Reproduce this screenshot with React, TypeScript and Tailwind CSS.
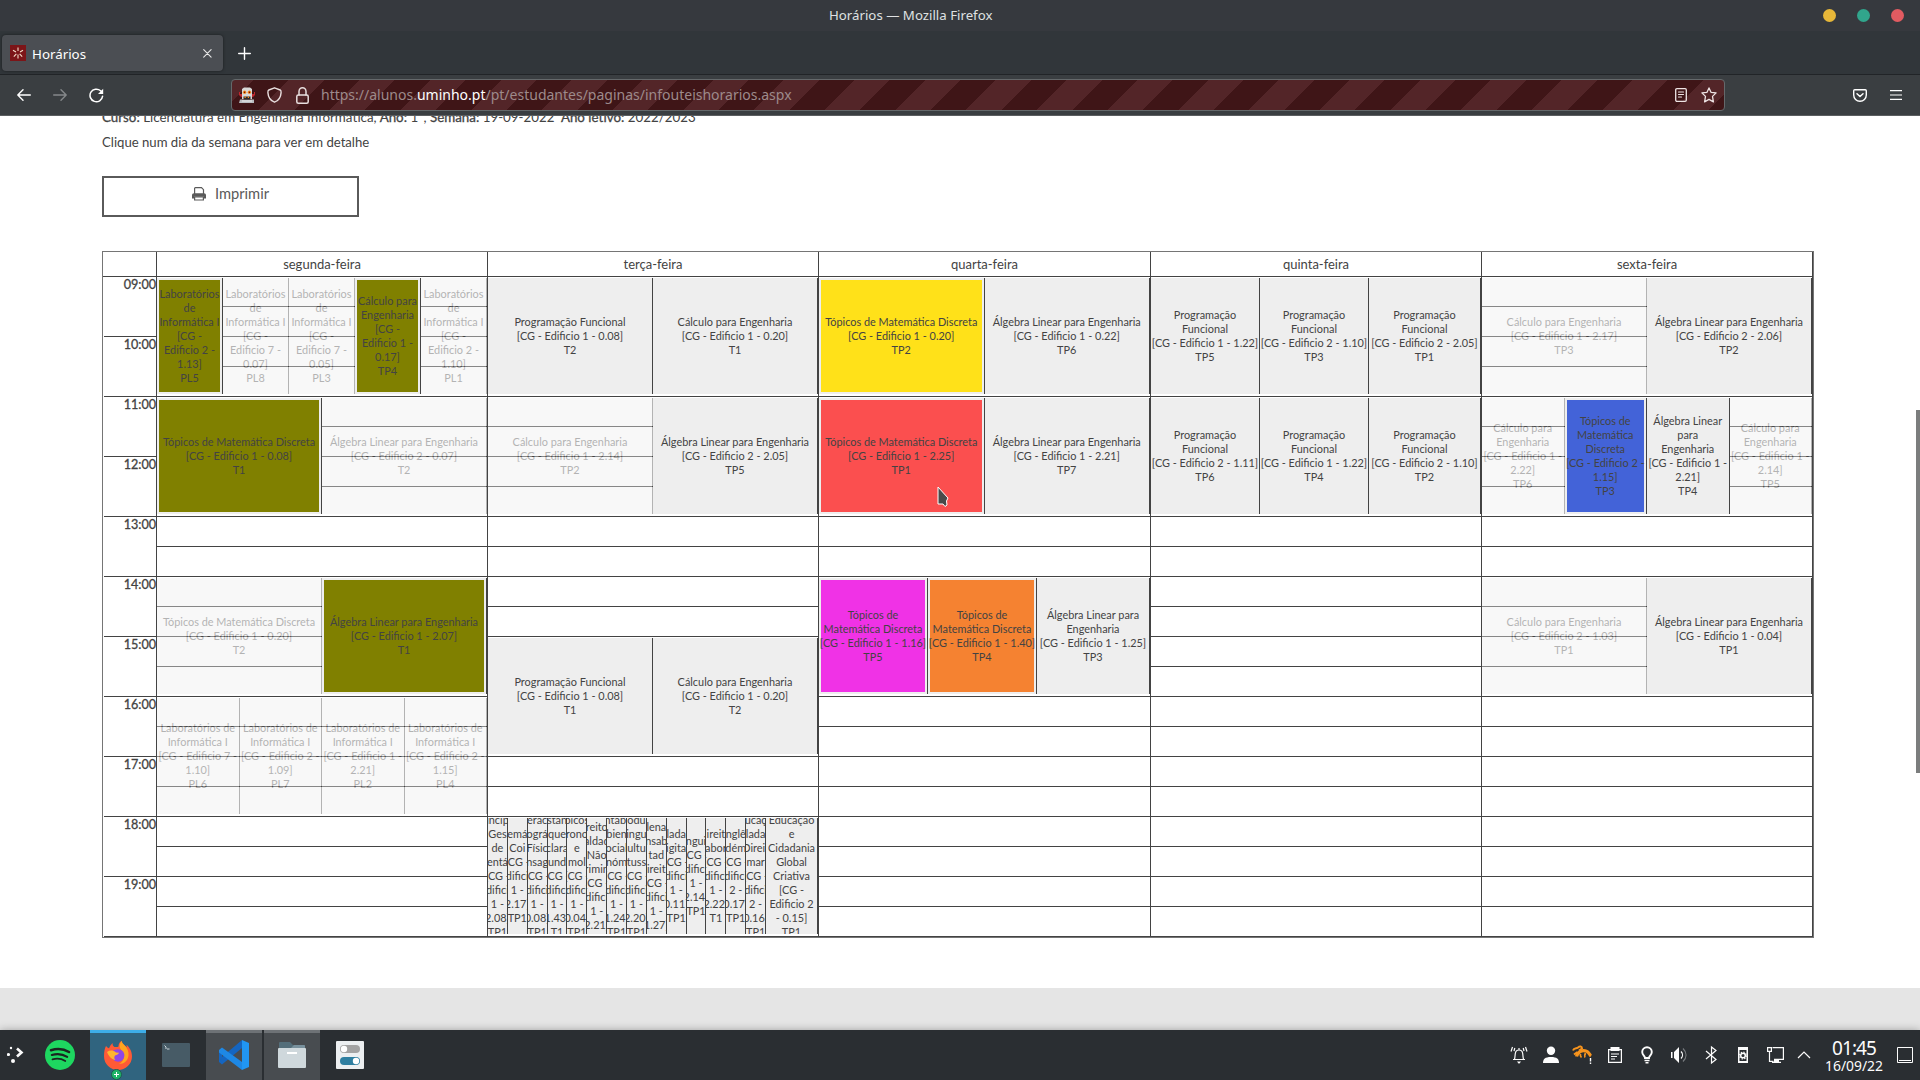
import React from "react";

type Ev = { lines: string[]; faded?: boolean; bg?: string; w?: string };
type Block = { start: number; events: Ev[] };

const OLIVE = "bg-[#808000]";

const TMD = "Tópicos de Matemática Discreta";
const ALE = "Álgebra Linear para Engenharia";
const CE = "Cálculo para Engenharia";
const PF = "Programação Funcional";

const room = (r: string) => `[CG - Edificio ${r}]`;
const lab = (a: string, b: string, c: string, faded = true, bg?: string): Ev => ({
  lines: ["Laboratórios", "de", "Informática I", "[CG -", `Edificio ${a} -`, `${b}]`, c],
  faded,
  bg,
});
const labWide = (a: string, b: string, c: string): Ev => ({
  lines: ["Laboratórios de", "Informática I", `[CG - Edificio ${a} -`, `${b}]`, c],
  faded: true,
});
const pf = (r: string, t: string, w: string): Ev => ({
  lines: ["Programação", "Funcional", room(r), t],
  w,
});
const W109 = "w-[109px] flex-none";
const FILL = "flex-1 min-w-0";

const days: { name: string; width: string; blocks: Block[] }[] = [
  {
    name: "segunda-feira",
    width: "w-[331px]",
    blocks: [
      {
        start: 0,
        events: [
          lab("2", "1.13", "PL5", false, OLIVE),
          lab("7", "0.07", "PL8"),
          lab("7", "0.05", "PL3"),
          { lines: ["Cálculo para", "Engenharia", "[CG -", "Edificio 1 -", "0.17]", "TP4"], bg: OLIVE },
          lab("2", "1.10", "PL1"),
        ],
      },
      {
        start: 4,
        events: [
          { lines: [TMD, room("1 - 0.08"), "T1"], bg: OLIVE },
          { lines: [ALE, room("2 - 0.07"), "T2"], faded: true },
        ],
      },
      {
        start: 10,
        events: [
          { lines: [TMD, room("1 - 0.20"), "T2"], faded: true },
          { lines: [ALE, room("1 - 2.07"), "T1"], bg: OLIVE },
        ],
      },
      {
        start: 14,
        events: [
          labWide("7", "1.10", "PL6"),
          labWide("2", "1.09", "PL7"),
          labWide("1", "2.21", "PL2"),
          labWide("2", "1.15", "PL4"),
        ],
      },
    ],
  },
  {
    name: "terça-feira",
    width: "w-[331px]",
    blocks: [
      {
        start: 0,
        events: [
          { lines: [PF, room("1 - 0.08"), "T2"] },
          { lines: [CE, room("1 - 0.20"), "T1"] },
        ],
      },
      {
        start: 4,
        events: [
          { lines: [CE, room("1 - 2.14"), "TP2"], faded: true },
          { lines: [ALE, room("2 - 2.05"), "TP5"] },
        ],
      },
      {
        start: 12,
        events: [
          { lines: [PF, room("1 - 0.08"), "T1"] },
          { lines: [CE, room("1 - 0.20"), "T2"] },
        ],
      },
      {
        start: 18,
        events: [
          ["incíp", "Ges", "de", "entá", "[CG -", "Edificio", "1 -", "2.08]", "TP1"],
          ["emá", "Coi", "[CG -", "Edificio", "1 -", "2.17]", "TP1"],
          ["erac", "ográ", "Físic", "nsag", "[CG -", "Edificio", "1 -", "0.08]", "TP1"],
          ["stân", "que", "clara", "und", "[CG -", "Edificio", "1 -", "1.43]", "T1"],
          ["picos", "rono", "e", "mol", "[CG -", "Edificio", "1 -", "0.04]", "TP1"],
          ["reito", "aldad", "Não", "rimin", "[CG -", "Edificio", "1 -", "2.21]"],
          ["ntabi", "bien", "ocial", "nóm", "[CG -", "Edificio", "1 -", "1.24]", "TP1"],
          ["odu", "ingu", "ultu", "tuss", "[CG -", "Edificio", "1 -", "2.20]", "TP1"],
          ["lena", "nsab", "tad", "ireit", "[CG -", "Edificio", "1 -", "1.27]"],
          ["lada", "igita", "[CG -", "Edificio", "1 -", "0.11]", "TP1"],
          ["ngui", "[CG -", "Edificio", "1 -", "2.14]", "TP1"],
          ["ireit", "abor", "[CG -", "Edificio", "1 -", "2.22]", "T1"],
          ["nglê", "dém", "[CG -", "Edificio", "2 -", "0.17]", "TP1"],
          ["ucaç", "lada", "Direit", "mar", "[CG -", "Edificio", "2 -", "0.16]", "TP1"],
          ["Educação", "e", "Cidadania", "Global", "Criativa", "[CG -", "Edificio 2", "- 0.15]", "TP1"],
        ].map((lines, i) => ({ lines, w: i < 14 ? "w-[19.87px] flex-none" : FILL })),
      },
    ],
  },
  {
    name: "quarta-feira",
    width: "w-[332px]",
    blocks: [
      {
        start: 0,
        events: [
          { lines: [TMD, room("1 - 0.20"), "TP2"], bg: "bg-[#ffe119]" },
          { lines: [ALE, room("1 - 0.22"), "TP6"] },
        ],
      },
      {
        start: 4,
        events: [
          { lines: [TMD, room("1 - 2.25"), "TP1"], bg: "bg-[#fb4f4f]" },
          { lines: [ALE, room("1 - 2.21"), "TP7"] },
        ],
      },
      {
        start: 10,
        events: [
          { lines: ["Tópicos de", "Matemática Discreta", room("1 - 1.16"), "TP5"], bg: "bg-[#f032e6]", w: W109 },
          { lines: ["Tópicos de", "Matemática Discreta", room("1 - 1.40"), "TP4"], bg: "bg-[#f58231]", w: W109 },
          { lines: ["Álgebra Linear para", "Engenharia", room("1 - 1.25"), "TP3"], w: FILL },
        ],
      },
    ],
  },
  {
    name: "quinta-feira",
    width: "w-[331px]",
    blocks: [
      { start: 0, events: [pf("1 - 1.22", "TP5", W109), pf("2 - 1.10", "TP3", W109), pf("2 - 2.05", "TP1", FILL)] },
      { start: 4, events: [pf("2 - 1.11", "TP6", W109), pf("1 - 1.22", "TP4", W109), pf("2 - 1.10", "TP2", FILL)] },
    ],
  },
  {
    name: "sexta-feira",
    width: "w-[331px]",
    blocks: [
      {
        start: 0,
        events: [
          { lines: [CE, room("1 - 2.17"), "TP3"], faded: true },
          { lines: [ALE, room("2 - 2.06"), "TP2"] },
        ],
      },
      {
        start: 4,
        events: [
          { lines: ["Cálculo para", "Engenharia", "[CG - Edificio 1 -", "2.22]", "TP6"], faded: true },
          {
            lines: ["Tópicos de", "Matemática", "Discreta", "[CG - Edificio 2 -", "1.15]", "TP3"],
            bg: "bg-[#4363d8]",
          },
          { lines: ["Álgebra Linear", "para", "Engenharia", "[CG - Edificio 1 -", "2.21]", "TP4"] },
          { lines: ["Cálculo para", "Engenharia", "[CG - Edificio 1 -", "2.14]", "TP5"], faded: true },
        ],
      },
      {
        start: 10,
        events: [
          { lines: [CE, room("2 - 1.03"), "TP1"], faded: true },
          { lines: [ALE, room("1 - 0.04"), "TP1"] },
        ],
      },
    ],
  },
];

const hours = ["09:00", "10:00", "11:00", "12:00", "13:00", "14:00", "15:00", "16:00", "17:00", "18:00", "19:00"];

function EventBox({ ev }: { ev: Ev }) {
  return (
    <div
      className={`h-[116px] overflow-hidden border-r border-[#434343] bg-[#eeeeee] ${ev.faded ? "opacity-40" : ""} ${
        ev.w ?? "flex-1 min-w-0"
      }`}
    >
      <div className={`h-full ${ev.bg ? "p-0.5" : ""}`}>
        <div
          className={`flex h-full flex-col items-center justify-center text-[10.9px] leading-[14px] whitespace-nowrap ${
            ev.bg ?? ""
          }`}
        >
          {ev.lines.map((l, i) => (
            <span key={i}>{l}</span>
          ))}
        </div>
      </div>
    </div>
  );
}

function Timetable() {
  return (
    <div className="mt-[34px] ml-[102px] flex w-[1712px] border border-[#757575] text-[#434343]">
      <div className="w-[54px] border-r border-[#434343]">
        <div className="h-[25px] border-b border-[#434343]" />
        {hours.map((h) => (
          <div
            key={h}
            className="ml-px flex h-[60px] justify-end border-b border-[#434343] pt-px text-[12.6px] leading-[14px] [-webkit-text-stroke:0.3px_#434343]"
          >
            {h}
          </div>
        ))}
      </div>
      {days.map((d) => (
        <div key={d.name} className={`${d.width} flex-none border-r border-[#434343]`}>
          <div className="flex h-[25px] items-center justify-center border-b border-[#434343] pt-px text-[13px]">
            {d.name}
          </div>
          <div className="grid">
            <div className="col-start-1 row-start-1">
              {Array.from({ length: 22 }, (_, i) => (
                <div key={i} className="h-[30px] border-b border-[#434343]" />
              ))}
            </div>
            <div className="col-start-1 row-start-1 grid min-w-0 grid-rows-[repeat(22,30px)]">
              {d.blocks.map((b) => (
                <div
                  key={b.start}
                  className="col-start-1 flex min-w-0 pt-px pb-[3px]"
                  style={{ gridRow: `${b.start + 1} / span 4` }}
                >
                  {b.events.map((e, i) => (
                    <EventBox key={i} ev={e} />
                  ))}
                </div>
              ))}
            </div>
          </div>
        </div>
      ))}
    </div>
  );
}

const stroke = { fill: "none", stroke: "currentColor", strokeLinecap: "round", strokeLinejoin: "round" } as const;

function Browser() {
  return (
    <header className="flex-none font-['Noto_Sans',sans-serif]">
      <div className="flex h-[31px] items-center bg-[#36393e] pr-4">
        <div className="flex-1 pl-[829px] text-[13.25px] text-[#dfe1e2]">Horários — Mozilla Firefox</div>
        <div className="flex gap-[21px]">
          <span className="size-[13px] rounded-full bg-[#e7b739]" />
          <span className="size-[13px] rounded-full bg-[#31a58c]" />
          <span className="size-[13px] rounded-full bg-[#e25b61]" />
        </div>
      </div>
      <div className="flex h-11 items-start border-b border-[#212427] bg-[#31363a] pt-1 pl-0.5">
        <div className="flex h-9 w-[221px] items-center rounded bg-[#4b4e53] pr-[11px] pl-2 shadow-[0_0_3px_rgba(0,0,0,0.5)]">
          <svg width="16" height="16" viewBox="0 0 16 16">
            <rect width="16" height="16" fill="#7c1518" />
            <path
              d="M8 2.5v3.6M8 9.6v3.9M3 5.2l3 1.7M13 5.2l-3 1.7M3.8 11.6l2.6-2.7M12.2 11.6 9.6 8.9"
              stroke="#f5dcc8"
              strokeWidth="1.1"
            />
          </svg>
          <span className="ml-1.5 flex-1 pt-[3px] text-[13.33px] text-white">Horários</span>
          <svg width="9" height="9" viewBox="0 0 9 9" className="text-[#e8e8e8]" {...stroke}>
            <path d="M.7.7l7.4 7.4M8.1.7.7 8.1" strokeWidth="1.1" />
          </svg>
        </div>
        <svg width="13" height="13" viewBox="0 0 13 13" className="mt-3 ml-[15px] text-white" {...stroke}>
          <path d="M6.5.7v11.6M.7 6.5h11.6" strokeWidth="1.4" />
        </svg>
      </div>
      <div className="flex h-[41px] items-start border-b border-[#5b5e60] bg-[#3a3e41]">
        <div className="flex h-10 w-[231px] items-center gap-[22px] pl-[17px]">
          <svg width="14" height="12" viewBox="0 0 14 12" className="text-white" {...stroke}>
            <path d="M13.3 6H.8M6 .8.8 6 6 11.2" strokeWidth="1.4" />
          </svg>
          <svg width="14" height="12" viewBox="0 0 14 12" className="text-[#85888a]" {...stroke}>
            <path d="M.7 6h12.5M8 .8 13.2 6 8 11.2" strokeWidth="1.4" />
          </svg>
          <svg width="15" height="15" viewBox="0 0 15 15" className="text-white" {...stroke}>
            <path d="M13.6 8.2A6.3 6.3 0 1 1 11.6 2.8l1 1" strokeWidth="1.5" />
            <path d="M14.2.8v5.2H9z" fill="currentColor" stroke="none" />
          </svg>
        </div>
        <div className="mt-1 flex h-8 w-[1494px] items-center rounded border border-[#64696b] bg-[repeating-linear-gradient(-45deg,#3f1517_0px,#3f1517_11px,#532528_11px,#532528_36px,#3f1517_36px,#3f1517_50px)] pr-[7px] pl-[7px]">
          <svg width="16" height="16" viewBox="0 0 16 16">
            <path d="M0 5h1v2h2v3H2L0 8zM16 5h-1v2h-2v3h1l2-2z" fill="#c1272d" />
            <path d="M3 2 5 .5h6L13 2v10H3z" fill="#d8d8d8" />
            <path d="M1 12.5h14V16H0z" fill="#b9bcc0" />
            <circle cx="5.6" cy="5.2" r="1.7" fill="#f58a1f" />
            <circle cx="10.4" cy="5.2" r="1.7" fill="#f58a1f" />
            <circle cx="5.6" cy="5.2" r=".7" fill="#600" />
            <circle cx="10.4" cy="5.2" r=".7" fill="#600" />
            <path d="M4.5 9.5h7v3h-7z" fill="#332b2b" />
            <path d="M5.5 9.5h1.3v1.4H5.5zM8.8 9.5H10v1.4H8.8z" fill="#f58a1f" />
            <path d="M3 14h10" stroke="#eee" />
          </svg>
          <svg width="15" height="16" viewBox="0 0 15 16" className="ml-3 text-[#e8dede]" {...stroke}>
            <path
              d="M7.5.8 13.2 3c1 .4 1 1.2.9 2.6-.3 4.6-2.9 8.2-6.6 9.6C3.8 13.8 1.2 10.2.9 5.6.8 4.2.8 3.4 1.8 3z"
              strokeWidth="1.4"
            />
          </svg>
          <svg width="13" height="17" viewBox="0 0 13 17" className="ml-[14px] text-[#e8dede]" {...stroke}>
            <rect x=".8" y="8" width="11.4" height="8.2" rx="1.5" strokeWidth="1.5" />
            <path d="M3 8V4.5a3.5 3.7 0 0 1 7 0V8" strokeWidth="1.5" />
          </svg>
          <div className="ml-3 flex-1 pb-px text-[14px] text-[#9d8a8b]">
            https://alunos.<span className="text-white">uminho.pt</span>/pt/estudantes/paginas/infouteishorarios.aspx
          </div>
          <svg width="12" height="14" viewBox="0 0 12 14" className="text-[#eee4e4]" {...stroke}>
            <rect x=".7" y=".7" width="10.6" height="12.6" rx="1.2" strokeWidth="1.3" />
            <path d="M3.5 4h5M3.5 6.5h5M3.5 9h3" strokeWidth="1.1" />
          </svg>
          <svg width="16" height="16" viewBox="0 0 16 16" className="ml-[14px] text-[#eee4e4]" {...stroke}>
            <path
              d="M8 .9l2 4.4 5.1.6-3.6 3.5.9 5.5L8 12.4l-4.4 2.5.9-5.5L.9 5.9 6 5.3z"
              strokeWidth="1.3"
            />
          </svg>
        </div>
        <div className="flex h-10 flex-1 items-center justify-end gap-[23px] pr-[18px] text-white">
          <svg width="14" height="13" viewBox="0 0 14 13" {...stroke}>
            <path
              d="M1.8.7h10.4c.7 0 1.1.4 1.1 1.1v4.2a6.3 6.3 0 0 1-12.6 0V1.8C.7 1.1 1.1.7 1.8.7z"
              strokeWidth="1.4"
            />
            <path d="M4 4.7l3 2.8 3-2.8" strokeWidth="1.5" />
          </svg>
          <svg width="12" height="10" viewBox="0 0 12 10" fill="currentColor">
            <path d="M0 0h12v1.2H0zM0 4.4h12v1.2H0zM0 8.8h12V10H0z" />
          </svg>
        </div>
      </div>
    </header>
  );
}

function Task({ active, open, children }: { active?: boolean; open?: boolean; children: React.ReactNode }) {
  return (
    <div
      className={`flex h-[50px] w-14 items-center justify-center border-t-[3px] pb-[3px] ${
        active
          ? "border-[#3daee9] bg-[#30647f]"
          : open
            ? "border-[#6e7276] bg-[#484c50]"
            : "border-transparent"
      }`}
    >
      {children}
    </div>
  );
}

function Tray({ children }: { children: React.ReactNode }) {
  return (
    <div className="flex w-8 justify-center">
      <svg
        width="18"
        height="18"
        viewBox="0 0 18 18"
        fill="none"
        stroke="#fcfcfc"
        strokeWidth="1.2"
        className="overflow-visible"
      >
        {children}
      </svg>
    </div>
  );
}

function Taskbar() {
  return (
    <footer className="z-10 flex h-[50px] flex-none bg-[#2a2e32] font-['Noto_Sans',sans-serif] shadow-[0_0_8px_rgba(0,0,0,0.3)]">
      <div className="flex w-8 items-center pl-[7px]">
        <svg width="17" height="18" viewBox="0 0 17 18" fill="#fcfcfc">
          <circle cx="4" cy="2" r="1.2" />
          <circle cx="1.5" cy="8.5" r="1.6" />
          <circle cx="6" cy="15" r="2" />
          <path d="M10 2.5l4.5 4-4.5 4" fill="none" stroke="#fcfcfc" strokeWidth="2.6" />
        </svg>
      </div>
      <Task>
        <svg width="30" height="30" viewBox="0 0 30 30">
          <circle cx="15" cy="15" r="15" fill="#1ed760" />
          <g fill="none" stroke="#1b2420" strokeLinecap="round">
            <path d="M6 10.2c6-1.8 13-1.2 18 1.8" strokeWidth="2.6" />
            <path d="M6.8 15c5-1.5 11-.9 15.4 1.8" strokeWidth="2.1" />
            <path d="M7.5 19.4c4-1.2 9-.7 12.8 1.6" strokeWidth="1.7" />
          </g>
        </svg>
      </Task>
      <div className="w-0.5" />
      <Task active>
        <div className="relative">
          <svg width="30" height="30" viewBox="0 0 30 30">
            <path
              d="M3 6c1 1 2 2 3 2.200C7 6 8 4.500 9.500 3c0 2 .6 3 2 4 2 .2 3 0 4-.5C15.300 4 17 2 18.500.8c.4 2.400 2 3.400 3.200 4.600L24 7.200c-.2-1-.4-1.800-.6-2.500 3.300 2.700 5.600 7 5.600 11.600A14 13.700 0 0 1 1 16.300C1 12 1.600 8.500 3 6z"
              fill="#ff5a36"
            />
            <path
              d="M18.500.8c.4 2.400 2 3.400 3.200 4.600 2.500 2.400 4.300 6 3.800 10.100-.5 5-4.500 8.500-9.500 8.500 5.500-3 6.500-9 3-13-2.500-2.800-3.500-5.500-.5-10.200z"
              fill="#ffa51f"
            />
            <path d="M9 12c2-3 8-4 11-.5 2.500 3 1.500 8-2.500 9.700-4 1.600-8.500-1-8.700-5.200z" fill="#9046e6" />
            <path d="M4 12c3-2 6-2 9 .5l3 .3c-.5 1.700-2 2.200-4 2.700-1 1.500-1 3 .5 4.500-3.500-.5-6.500-3-8.500-8z" fill="#ffb52e" />
          </svg>
          <span className="absolute -bottom-[10px] left-2 flex size-[11px] items-center justify-center rounded-full border border-[#1f5b50] bg-[#1eb567]">
            <svg width="5" height="5" viewBox="0 0 5 5">
              <path d="M2.5 0v5M0 2.5h5" stroke="#fff" />
            </svg>
          </span>
        </div>
      </Task>
      <div className="w-0.5" />
      <Task>
        <svg width="28" height="24" viewBox="0 0 28 24">
          <rect width="28" height="24" rx="1" fill="#475b66" />
          <path d="M2.5 2.5 4 4v2M5 6h2.5" fill="none" stroke="#cfd8dc" />
        </svg>
      </Task>
      <div className="w-0.5" />
      <Task open>
        <svg width="30" height="30" viewBox="0 0 30 30">
          <path d="M0 22l3 2.5L23 8V0L0 19.5z" fill="#1565c0" />
          <path d="M0 10v12l3-3.5v-5z" fill="#1565c0" />
          <path d="M0 10l3-2.5L23 22v8L0 12.5z" fill="#1e88e5" />
          <path d="M23 0l7 3v24l-7 3z" fill="#2196f3" />
        </svg>
      </Task>
      <div className="w-0.5" />
      <Task open>
        <svg width="28" height="26" viewBox="0 0 28 26">
          <path d="M1 1q0-1 1-1h10l3 3h11q1 0 1 1v6H1z" fill="#546e7a" />
          <path d="M14 5l2-2h10q1 0 1 1v3H12z" fill="#78909c" />
          <rect y="6" width="28" height="20" rx="1" fill="#cfd8dc" />
          <rect x="9" y="10" width="10" height="2" fill="#fff" />
        </svg>
      </Task>
      <div className="w-0.5" />
      <Task>
        <svg width="28" height="28" viewBox="0 0 28 28">
          <rect width="28" height="28" rx="1" fill="#eceff1" />
          <rect x="4" y="4" width="20" height="8" rx="4" fill="#a3a3a3" />
          <circle cx="8" cy="8" r="3.2" fill="#fff" />
          <rect x="4" y="16" width="20" height="8" rx="4" fill="#2f7fa1" />
          <circle cx="20" cy="20" r="3.2" fill="#fff" />
        </svg>
      </Task>
      <div className="flex flex-1 items-center justify-end">
        <Tray>
          <path d="M3 13.5h12M4.5 13.5c.5-2 .5-4 .8-6C5.6 5 7 4 9 4s3.4 1 3.7 3.5c.3 2 .3 4 .8 6M9 2v2M1 5.5 2.5 1M4 5l.8-3M17 5.5 15.500 1M14 5l-.8-3" />
          <path d="M7 15.500h4L9.500 17.500h-1z" fill="#fcfcfc" stroke="none" />
        </Tray>
        <Tray>
          <path d="M1 17c0-4 2-6 8-6s8 2 8 6z" fill="#fcfcfc" stroke="none" />
          <circle cx="9" cy="4.8" r="4.2" fill="#fcfcfc" stroke="none" />
        </Tray>
        <Tray>
          <path
            d="M-1 4.500C0 1.500 3 3 4.500 1.200 5.500 0 8 0 8 2.500L5 4.500M0 8.500 3.500 6"
            fill="none"
            stroke="#f7941d"
            strokeWidth="2"
          />
          <path
            d="M2.500 10.500C3.500 6 8 3.500 12 5c3 1 3.500 4 5 5"
            stroke="#f7941d"
            strokeWidth="3.2"
          />
          <path d="M6.500 8c-.5 2-.5 2.500 1 3.500M11.500 7c-1 2-1 3.500-.5 4.500" stroke="#f7941d" strokeWidth="1.8" />
          <path d="M16.500 12v3.500M16.500 16.500v1.400" strokeWidth="1.4" />
        </Tray>
        <Tray>
          <path d="M2.6 3.6h12.8v12.8H2.6zM5 8h8M5 10.5h6M5 13h4" />
          <path d="M4.5 1h9v4h-9z" fill="#fcfcfc" stroke="none" />
        </Tray>
        <Tray>
          <path d="M7 12c0-2-2.8-3-2.8-6a4.8 4.8 0 0 1 9.600 0c0 3-2.800 4-2.800 6z" strokeWidth="1.9" />
          <path d="M6.5 14.5h5M7.5 16.8h3" strokeWidth="1.4" />
        </Tray>
        <Tray>
          <path d="M1 6h1.500v6H1zM4 6l5-5v16l-5-5z" fill="#fcfcfc" stroke="none" />
          <path d="M11 5.500c2 2 2 5 0 7" />
          <path d="M13 2.500c4 4 4 9 0 13" stroke="#777b7e" />
        </Tray>
        <Tray>
          <path d="M4 5l10 8.5L9.5 17V1L14 4.5 4 13" />
        </Tray>
        <Tray>
          <path d="M4 1h10v16H4z" fill="#fcfcfc" stroke="none" />
          <path d="M5.5 4h7v11h-7z" fill="#2a2e32" stroke="none" />
          <circle cx="9" cy="9.5" r="2.3" strokeWidth="1.5" />
          <circle cx="9" cy="9.5" r="3.4" strokeDasharray="1.3 1.37" />
        </Tray>
        <Tray>
          <path d="M6.5 1.6h10.9v11.8H8M1.600 1.600h3.800v3.800H1.600zM3.500 5.400v10h4M10 13v3M6 16.400h9" />
          <path d="M8 14h5v3H8z" fill="#fcfcfc" stroke="none" />
        </Tray>
        <div className="flex w-[26px] justify-center">
          <svg width="14" height="8" viewBox="0 0 14 8" fill="none" stroke="#fcfcfc" strokeWidth="1.2">
            <path d="M1 7l6-6 6 6" />
          </svg>
        </div>
        <div className="flex w-[72px] flex-col items-center pt-0.5 pl-0.5 text-[#fcfcfc]">
          <span className="text-[19px] leading-[19px] tracking-[-0.9px]">01:45</span>
          <span className="text-[13.9px] leading-[16px]">16/09/22</span>
        </div>
        <div className="flex w-[31px] justify-center">
          <svg width="16" height="16" viewBox="0 0 16 16" fill="none" stroke="#fcfcfc">
            <path d="M.5.5h15v15H.5zM2 13.5h12" />
          </svg>
        </div>
      </div>
    </footer>
  );
}

export default function App() {
  return (
    <div className="relative flex h-[1080px] w-[1920px] flex-col overflow-hidden bg-white">
      <Browser />
      <main className="flex flex-1 overflow-hidden font-['Lato',sans-serif] text-[#434343]">
        <div className="flex flex-1 flex-col">
          <div className="-mt-[7px] ml-[102px] h-[17px] flex-none text-[13.35px] leading-[17px] whitespace-pre">
            <span className="[-webkit-text-stroke:0.3px_#434343]">Curso:</span> Licenciatura em Engenharia Informática,{" "}
            <span className="[-webkit-text-stroke:0.3px_#434343]">Ano:</span> 1º,{" "}
            <span className="[-webkit-text-stroke:0.3px_#434343]">Semana:</span> 19-09-2022{"  "}
            <span className="[-webkit-text-stroke:0.3px_#434343]">Ano letivo:</span> 2022/2023
          </div>
          <div className="mt-2 ml-[102px] text-[13.15px] leading-[17px]">
            Clique num dia da semana para ver em detalhe
          </div>
          <div className="mt-[25px] ml-[102px] flex h-[41px] w-[257px] justify-center gap-[9px] border-2 border-[#5a5a5a] pt-1.5 text-[14.7px] leading-[19px] text-[#5a5a5a]">
            <svg width="14" height="14" viewBox="0 0 14 14" className="mt-[3px]">
              <path
                d="M2.6 7V1.5c0-.5.3-.8.8-.8h6.1l2 2V7M2.6 9.8h8.800V13H2.600z"
                fill="none"
                stroke="#5a5a5a"
                strokeWidth="1.2"
              />
              <path d="M0 8.200C0 7 .8 6.200 2 6.200h10c1.200 0 2 .8 2 2V11.400h-2V9.400H2v2H0z" fill="#5a5a5a" />
            </svg>
            <span>Imprimir</span>
          </div>
          <Timetable />
          <div className="mt-[50px] flex-1 bg-[#e5e5e5]" />
        </div>
        <div className="-ml-1 w-1 pt-[294px]">
          <div className="h-[363px] bg-[#7b7d7d]" />
        </div>
      </main>
      <Taskbar />
      <svg width="12" height="22" viewBox="0 0 12 22" className="absolute top-[486px] left-[937px]">
        <path d="M1 1v17h5l2 2.5 2-1.5-.5-4L11 12z" fill="#4a4a4a" stroke="#fff" strokeWidth="1" />
      </svg>
    </div>
  );
}
